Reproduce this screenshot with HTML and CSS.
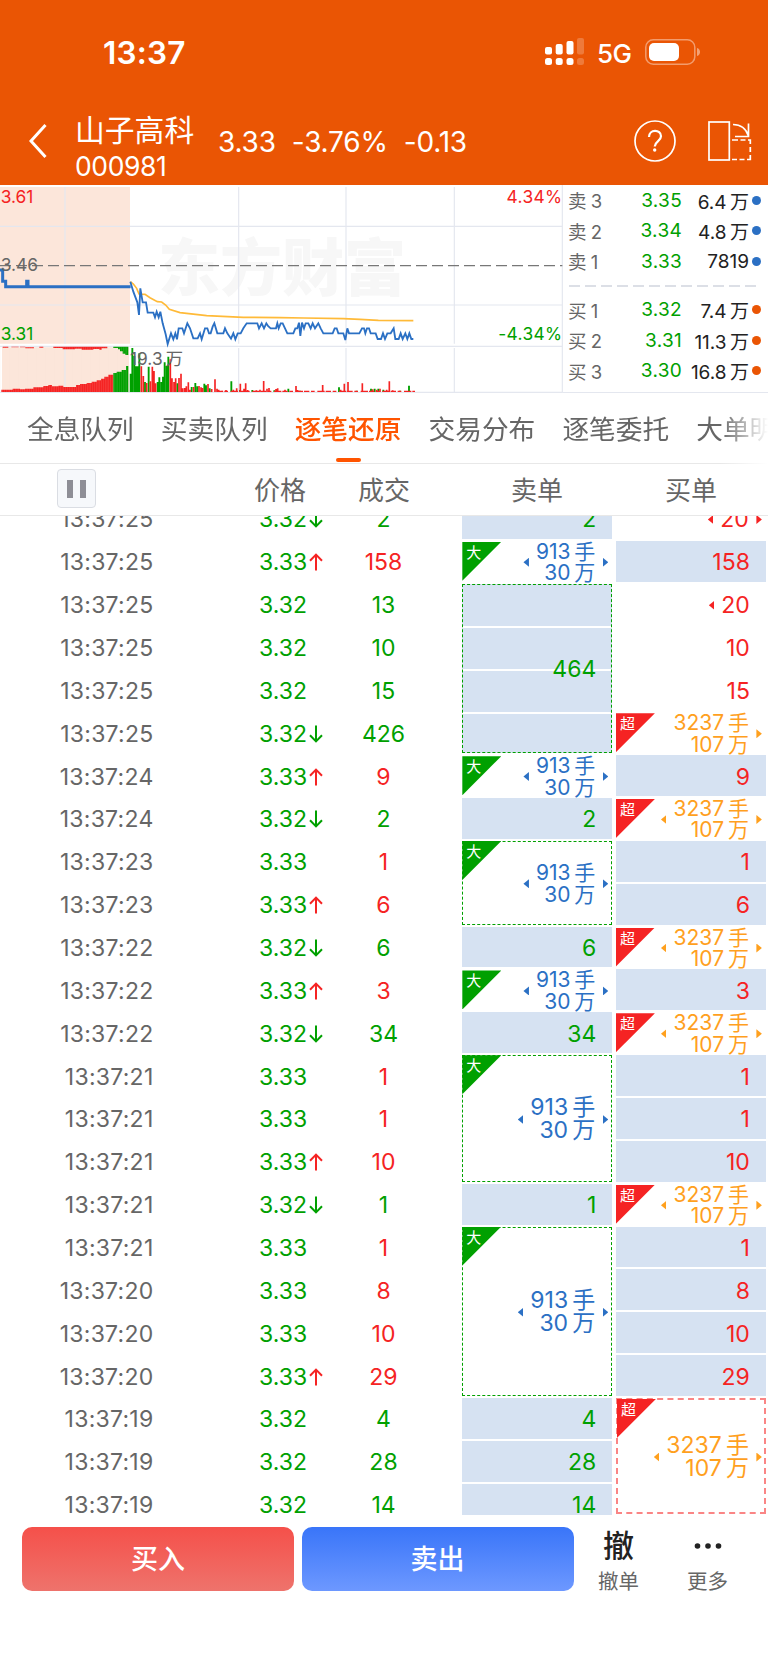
FILE: index.html
```html
<!doctype html>
<html lang="zh-CN">
    <head>
        <meta charset="UTF-8" />
        <title>山子高科 000981</title>
        <link rel="stylesheet" href="styles.css">
    </head>
    <body>
        <!-- Shared arrows -->
        <svg class="defs">
            <symbol id="up" viewBox="0 0 14 18">
                <path d="M7 17.5V1.8M1 7.8L7 1.6l6 6.2" />
            </symbol>
            <symbol id="down" viewBox="0 0 14 18">
                <path d="M7 .5v15.700M1 10.200l6 6.200 6-6.200" />
            </symbol>
        </svg>

        <div class="header">
            <div class="status-bar">
                <div class="clock">13:37</div>
                <div class="status-icons">
                    <svg width="39" height="28" viewBox="0 0 39 28" fill="#fff">
                        <rect x="0" y="9" width="7" height="7.500" rx="2" />
                        <rect x="10.700" y="6" width="7" height="10.500" rx="2" />
                        <rect x="21.500" y="3" width="7" height="13.500" rx="2" />
                        <rect x="32" y="0" width="7" height="16.500" rx="2" opacity=".22" />
                        <rect x="0" y="20" width="7" height="7" rx="2.500" />
                        <rect x="10.700" y="20" width="7" height="7" rx="2.500" />
                        <rect x="21.500" y="20" width="7" height="7" rx="2.500" />
                        <rect x="32" y="20" width="7" height="7" rx="2.500" opacity=".22" />
                    </svg>
                    <span class="network">5G</span>
                    <svg width="56" height="26" viewBox="0 0 56 26">
                        <rect x=".8" y=".8" width="49" height="24.400" rx="7.500" fill="none" stroke="#fff" stroke-opacity=".42" stroke-width="1.500" />
                        <rect x="4" y="4" width="30" height="18" rx="5" fill="#fff" />
                        <path d="M52 9c4 1 4 7 0 8z" fill="#fff" opacity=".45" />
                    </svg>
                </div>
            </div>
            <div class="nav">
                <svg class="back" width="18" height="36" viewBox="0 0 18 36">
                    <path d="M16.500 2L2 18l14.500 16" fill="none" stroke="#fff" stroke-width="3" />
                </svg>
                <div class="stock">
                    <div class="stock-name">山子高科</div>
                    <div class="stock-code">000981</div>
                </div>
                <div class="quote">
                    <span>3.33</span>
                    <span>-3.76%</span>
                    <span>-0.13</span>
                </div>
                <svg class="help" width="42" height="42" viewBox="0 0 42 42" fill="none" stroke="#fff">
                    <circle cx="21" cy="21" r="20" stroke-width="1.700" />
                    <path d="M15 17c0-8 12-8 12-.8 0 5-6.300 5.300-6.300 10.300" stroke-width="2.200" />
                    <circle cx="20.700" cy="30" r="1.700" fill="#fff" stroke="none" />
                </svg>
                <svg class="rotate" width="44" height="42" viewBox="0 0 44 42" fill="none" stroke="#fff" stroke-width="1.700">
                    <rect x="1" y="2" width="20.300" height="38" />
                    <path d="M25 4.500c8 0 13 4 15.500 11.500M40.500 3.500v13H27" />
                    <path d="M24 20h6m2.500 0h5m2.500 0h2.300v4m0 3v5m0 3v4.500H39m-2.500 0h-5m-2.500 0h-5" />
                </svg>
            </div>
        </div>

        <!-- Intraday chart and order book -->
        <div class="market">
            <svg class="chart" viewBox="0 15 1689 624">
                <path class="auction" d="M0 21H390V491H0zM6 502H387V636H6z" />
                <text class="watermark" x="474" y="333">东方财富</text>
                <path class="grid" d="M0 139H1687M0 375H1687M0 499H1687M0 637H1687M195 21V491M716 21V491M1038 21V491M1363 21V491M195 504V636M716 504V636M1038 504V636M1363 504V636M1687 15V639" />
                <path class="base" d="M0 257H1687" />
                <polyline class="average" points="391,305 400,312 410,325 417,342 435,343 450,353 472,365 485,366 497,375 508,388 540,398 620,407 730,412 840,413 912,414 1030,416 1080,418 1135,421 1240,422" />
                <path class="pre" d="M0 270H8V304H17V320H80V304H84V320H392" />
                <polyline class="price-line" points="391,305 400,335 412,367 417,405 421,325 428,367 438,367 443,398 460,398 465,412 470,395 476,412 481,395 488,430 497,463 503,492 513,460 520,478 526,460 531,478 536,445 547,445 552,460 562,430 570,445 580,475 593,475 600,460 605,478 615,445 622,445 627,460 632,460 638,440 643,430 652,460 670,460 675,445 682,460 693,476 700,460 706,478 713,460 722,460 730,445 740,430 772,430 777,445 785,430 792,445 799,430 804,438 812,445 828,445 832,430 836,445 842,430 848,430 855,445 862,460 880,460 886,445 892,445 897,428 901,468 906,428 912,445 917,430 925,430 932,445 938,430 945,445 955,430 962,445 970,460 998,460 1004,445 1010,445 1015,460 1030,460 1036,480 1042,445 1047,460 1078,460 1086,445 1092,445 1096,460 1101,445 1107,445 1112,460 1127,460 1133,477 1143,477 1149,460 1155,477 1162,460 1172,460 1181,445 1186,477 1196,477 1202,460 1208,477 1216,460 1222,477 1228,460 1234,477 1240,477" />
                <path class="fill-red" d="M4 636V629H38V626H60V628H75V626H100V622H130V618H145V615H156V619H175V617H190V621H228V615H240V612H260V609H275V605H290V601H303V596H313V590H325V584H340V636z" />
                <path class="fill-green" d="M340 636V579H350V575H365V570H378V558H385V636z" />
                <path class="fill-red" d="M8 500H25V503H8zM34 500H56V502H34zM60 500H76V505H102V502H60zM118 500H130V503H118zM143 500H160V504H188V508H225V506H245V509H280V507H298V509H305V505H322V500z" />
                <path class="fill-green" d="M340 500H385V525H376V521H368V514H360V508H354V504H340z" />
                <path class="stripe" d="M2 569H387" />
                <path class="bars-green" d="M392 636V581M397 636V504M403 636V528M408 636V559M413 636V559M418 636V520M435 636V606M446 636V560M473 636V606M478 636V592M484 636V606M489 636V590M494 636V547M500 636V558M505 636V530M532 636V610M575 636V621M586 636V609M592 636V619M613 636V611M618 636V616M629 636V625M694 636V604M720 636V630M757 636V630M823 636V631M865 636V626M900 636V632M1017 636V622M1070 636V632M1113 636V626M1124 636V626M1135 636V626M1150 636V629M1200 636V632M1227 636V617" />
                <path class="bars-red" d="M424 636V559M430 636V588M440 636V609M451 636V604M457 636V560M462 636V573M467 636V610M511 636V538M516 636V595M522 636V606M527 636V595M537 636V594M543 636V581M548 636V625M554 636V624M559 636V619M565 636V607M570 636V629M581 636V621M597 636V618M603 636V622M608 636V624M624 636V612M635 636V627M645 636V598M651 636V626M656 636V629M667 636V632M678 636V630M700 636V629M710 636V625M721 636V611M732 636V626M737 636V610M743 636V630M769 636V631M780 636V629M791 636V603M801 636V626M807 636V624M828 636V627M833 636V625M855 636V629M888 636V618M893 636V630M968 636V615M1022 636V629M1033 636V611M1044 636V606M1087 636V610M1118 636V628M1130 636V629M1140 636V626M1160 636V629M1168 636V604M1178 636V631" />
                <path class="floor" d="M652 634H1245" />
                <text class="label red" x="2" y="68">3.61</text>
                <text class="label" x="2" y="274">3.46</text>
                <text class="label green" x="2" y="479">3.31</text>
                <text class="label" x="390" y="556">19.3&thinsp;万</text>
                <text class="label red end" x="1687" y="68">4.34%</text>
                <text class="label green end" x="1687" y="479">-4.34%</text>
            </svg>
            <div class="book">
                <div class="level ask"><span>卖 3</span><b>3.35</b><i>6.4&thinsp;万</i></div>
                <div class="level ask"><span>卖 2</span><b>3.34</b><i>4.8&thinsp;万</i></div>
                <div class="level ask"><span>卖 1</span><b>3.33</b><i>7819</i></div>
                <svg class="book-line" width="190" height="18" viewBox="0 0 190 18">
                    <path d="M0 9H190" stroke="#dcdfe6" stroke-width="2" stroke-dasharray="11 5" />
                </svg>
                <div class="level bid"><span>买 1</span><b>3.32</b><i>7.4&thinsp;万</i></div>
                <div class="level bid"><span>买 2</span><b>3.31</b><i>11.3&thinsp;万</i></div>
                <div class="level bid"><span>买 3</span><b>3.30</b><i>16.8&thinsp;万</i></div>
            </div>
        </div>

        <!-- Tabs -->
        <div class="tabs">
            <div class="tab">全息队列</div>
            <div class="tab">买卖队列</div>
            <div class="tab active">逐笔还原</div>
            <div class="tab">交易分布</div>
            <div class="tab">逐笔委托</div>
            <div class="tab">大单明细</div>
        </div>

        <div class="list-header">
            <div class="pause"></div>
            <div>价格</div>
            <div>成交</div>
            <div>卖单</div>
            <div>买单</div>
        </div>

        <!-- Tick list -->
        <div class="list">
            <div class="trades">
                <div class="trade"><span>13:37:25</span><b>3.32<svg class="green"><use href="#down" /></svg></b><i class="green">2</i></div>
                <div class="trade"><span>13:37:25</span><b>3.33<svg class="red"><use href="#up" /></svg></b><i class="red">158</i></div>
                <div class="trade"><span>13:37:25</span><b>3.32</b><i class="green">13</i></div>
                <div class="trade"><span>13:37:25</span><b>3.32</b><i class="green">10</i></div>
                <div class="trade"><span>13:37:25</span><b>3.32</b><i class="green">15</i></div>
                <div class="trade"><span>13:37:25</span><b>3.32<svg class="green"><use href="#down" /></svg></b><i class="green">426</i></div>
                <div class="trade"><span>13:37:24</span><b>3.33<svg class="red"><use href="#up" /></svg></b><i class="red">9</i></div>
                <div class="trade"><span>13:37:24</span><b>3.32<svg class="green"><use href="#down" /></svg></b><i class="green">2</i></div>
                <div class="trade"><span>13:37:23</span><b>3.33</b><i class="red">1</i></div>
                <div class="trade"><span>13:37:23</span><b>3.33<svg class="red"><use href="#up" /></svg></b><i class="red">6</i></div>
                <div class="trade"><span>13:37:22</span><b>3.32<svg class="green"><use href="#down" /></svg></b><i class="green">6</i></div>
                <div class="trade"><span>13:37:22</span><b>3.33<svg class="red"><use href="#up" /></svg></b><i class="red">3</i></div>
                <div class="trade"><span>13:37:22</span><b>3.32<svg class="green"><use href="#down" /></svg></b><i class="green">34</i></div>
                <div class="trade"><span>13:37:21</span><b>3.33</b><i class="red">1</i></div>
                <div class="trade"><span>13:37:21</span><b>3.33</b><i class="red">1</i></div>
                <div class="trade"><span>13:37:21</span><b>3.33<svg class="red"><use href="#up" /></svg></b><i class="red">10</i></div>
                <div class="trade"><span>13:37:21</span><b>3.32<svg class="green"><use href="#down" /></svg></b><i class="green">1</i></div>
                <div class="trade"><span>13:37:21</span><b>3.33</b><i class="red">1</i></div>
                <div class="trade"><span>13:37:20</span><b>3.33</b><i class="red">8</i></div>
                <div class="trade"><span>13:37:20</span><b>3.33</b><i class="red">10</i></div>
                <div class="trade"><span>13:37:20</span><b>3.33<svg class="red"><use href="#up" /></svg></b><i class="red">29</i></div>
                <div class="trade"><span>13:37:19</span><b>3.32</b><i class="green">4</i></div>
                <div class="trade"><span>13:37:19</span><b>3.32</b><i class="green">28</i></div>
                <div class="trade"><span>13:37:19</span><b>3.32</b><i class="green">14</i></div>
            </div>

            <div class="orders sell">
                <div class="cell fill">2</div>
                <div class="cell big prev next"><em>大</em><p>913&thinsp;手<br>30&thinsp;万</p></div>
                <div class="cell fill dashed rows-4">464</div>
                <div class="cell big prev next"><em>大</em><p>913&thinsp;手<br>30&thinsp;万</p></div>
                <div class="cell fill">2</div>
                <div class="cell big dashed prev next rows-2"><em>大</em><p>913&thinsp;手<br>30&thinsp;万</p></div>
                <div class="cell fill">6</div>
                <div class="cell big prev next"><em>大</em><p>913&thinsp;手<br>30&thinsp;万</p></div>
                <div class="cell fill">34</div>
                <div class="cell big dashed prev next rows-3"><em>大</em><p>913&thinsp;手<br>30&thinsp;万</p></div>
                <div class="cell fill">1</div>
                <div class="cell big dashed prev next rows-4"><em>大</em><p>913&thinsp;手<br>30&thinsp;万</p></div>
                <div class="cell fill">4</div>
                <div class="cell fill">28</div>
                <div class="cell fill">14</div>
            </div>

            <div class="orders buy">
                <div class="cell prev next">20</div>
                <div class="cell fill">158</div>
                <div class="cell prev">20</div>
                <div class="cell">10</div>
                <div class="cell">15</div>
                <div class="cell big next"><em>超</em><p>3237&thinsp;手<br>107&thinsp;万</p></div>
                <div class="cell fill">9</div>
                <div class="cell big prev next"><em>超</em><p>3237&thinsp;手<br>107&thinsp;万</p></div>
                <div class="cell fill">1</div>
                <div class="cell fill">6</div>
                <div class="cell big prev next"><em>超</em><p>3237&thinsp;手<br>107&thinsp;万</p></div>
                <div class="cell fill">3</div>
                <div class="cell big prev next"><em>超</em><p>3237&thinsp;手<br>107&thinsp;万</p></div>
                <div class="cell fill">1</div>
                <div class="cell fill">1</div>
                <div class="cell fill">10</div>
                <div class="cell big prev next"><em>超</em><p>3237&thinsp;手<br>107&thinsp;万</p></div>
                <div class="cell fill">1</div>
                <div class="cell fill">8</div>
                <div class="cell fill">10</div>
                <div class="cell fill">29</div>
                <div class="cell big dashed prev next rows-3 last"><em>超</em><p>3237&thinsp;手<br>107&thinsp;万</p></div>
            </div>
        </div>

        <div class="footer">
            <div class="button buy-button">买入</div>
            <div class="button sell-button">卖出</div>
            <div class="action">
                <strong>撤</strong>
                <span>撤单</span>
            </div>
            <div class="action">
                <svg width="28" height="32" viewBox="0 0 28 32" fill="#222">
                    <circle cx="3.500" cy="16" r="2.800" />
                    <circle cx="14" cy="16" r="2.800" />
                    <circle cx="24.500" cy="16" r="2.800" />
                </svg>
                <span>更多</span>
            </div>
        </div>
    </body>
</html>
```

FILE: styles.css
```css
* {
    box-sizing: border-box;
}

body {
    margin: 0;
    width: 768px;
    height: 1665px;
    overflow: hidden;
    background-color: #fff;
    color: #666;
    font-family: Inter, "Noto Sans CJK SC", sans-serif;
    font-size: 23px;
}

b,
i,
em {
    font-weight: 400;
    font-style: normal;
}

.defs {
    display: none;
}

.red {
    color: #f52323;
}

.green {
    color: #00a000;
}

/* Header */
.header {
    height: 185px;
    background-color: #ea5504;
    color: #fff;
}

.status-bar {
    display: flex;
    justify-content: space-between;
    height: 105px;
    padding: 33px 67px 0 103px;
}

.clock {
    font-size: 31.5px;
    font-weight: 600;
    line-height: 40px;
    letter-spacing: 0.2px;
}

.status-icons {
    display: flex;
    align-items: center;
    height: 38px;
}

.network {
    width: 35px;
    margin: 2px 13px 0 13px;
    font-size: 26px;
    font-weight: 500;
    letter-spacing: -0.5px;
}

.nav {
    display: flex;
    height: 80px;
    padding-left: 29px;
}

.back {
    margin-top: 18px;
}

.stock {
    width: 143px;
    margin-left: 28px;
    padding-top: 4px;
}

.stock-name {
    font-size: 29.8px;
    line-height: 42px;
}

.stock-code {
    padding-top: 2px;
    font-size: 26.5px;
    line-height: 27px;
    letter-spacing: -0.4px;
}

.quote {
    display: flex;
    gap: 16px;
    width: 416px;
    padding-top: 19px;
    font-size: 28px;
    line-height: 36px;
    letter-spacing: -0.2px;
    white-space: nowrap;
}

.help {
    margin-top: 15px;
}

.rotate {
    margin: 15px 0 0 32px;
}

/* Chart */
.market {
    display: flex;
    height: 208px;
}

.chart {
    width: 563px;
    height: 208px;
}

.chart path,
.chart polyline {
    fill: none;
}

.chart .auction {
    fill: #fce6da;
}

.watermark {
    fill: #f7f7f7;
    font-size: 186px;
    font-weight: 900;
}

.grid {
    stroke: #e4e7ef;
    stroke-width: 3.5;
}

.base {
    stroke: #777;
    stroke-width: 3.5;
    stroke-dasharray: 33 15;
}

.average {
    stroke: #ffba38;
    stroke-width: 5;
}

.pre {
    stroke: #2b70c4;
    stroke-width: 9;
}

.price-line {
    stroke: #2b70c4;
    stroke-width: 5.5;
}

.chart .fill-red {
    fill: #f52323;
}

.chart .fill-green {
    fill: #00a000;
}

.stripe {
    stroke: #fce6da;
    stroke-opacity: 0.3;
    stroke-width: 134;
    stroke-dasharray: 1 4.4;
}

.bars-red {
    stroke: #f52323;
    stroke-width: 5;
}

.bars-green {
    stroke: #00a000;
    stroke-width: 5.6;
}

.floor {
    stroke: #f52323;
    stroke-width: 4;
    stroke-dasharray: 16 5 11 8 22 3;
}

.label {
    fill: #666;
    font-size: 52px;
}

.label.red {
    fill: #f52323;
}

.label.green {
    fill: #00a000;
}

.label.end {
    text-anchor: end;
    letter-spacing: 1px;
}

/* Order book */
.book {
    width: 205px;
    padding-left: 5px;
    border-bottom: 1px solid #e4e7ef;
}

.level {
    display: grid;
    grid-template-columns: 43px 71px 67px 13px;
    align-items: center;
    height: 30.5px;
    font-size: 19px;
}

.level span {
    font-size: 18.5px;
    word-spacing: -1px;
}

.level b {
    color: #00a000;
    text-align: right;
    letter-spacing: 0.3px;
}

.level i {
    display: flex;
    justify-content: flex-end;
    color: #222;
    white-space: nowrap;
}

.level::after {
    content: "";
    width: 9px;
    height: 9px;
    margin-left: 3px;
    border-radius: 50%;
    background-color: #2b70c4;
}

.level.bid::after {
    background-color: #ea5504;
}

.book-line {
    display: block;
    margin-left: 1px;
}

/* Tabs */
.tabs {
    display: flex;
    gap: 27.1px;
    height: 71px;
    padding-left: 27px;
    overflow: hidden;
    border-bottom: 1px solid #e8e8e8;
    -webkit-mask-image: linear-gradient(90deg, #000 720px, transparent 768px);
    mask-image: linear-gradient(90deg, #000 720px, transparent 768px);
}

.tab {
    position: relative;
    flex: none;
    font-size: 26.7px;
    line-height: 72px;
}

.tab.active {
    color: #ff5400;
    font-weight: 500;
}

.tab.active::after {
    content: "";
    position: absolute;
    left: 41px;
    bottom: 1px;
    width: 25px;
    height: 4px;
    border-radius: 2px;
    background-color: #ff5400;
}

.list-header {
    display: grid;
    grid-template-columns: 197px 104px 153px 154px 103px;
    align-items: center;
    height: 52px;
    padding: 0 0 2px 57px;
    border-bottom: 1px solid #e8e8e8;
    font-size: 26px;
}

.pause {
    display: flex;
    gap: 7px;
    justify-content: center;
    align-items: center;
    width: 39px;
    height: 39px;
    border: 1px solid #dadde3;
    border-radius: 4px;
    background-color: #f6f8fb;
}

.pause::before,
.pause::after {
    content: "";
    width: 6px;
    height: 18px;
    background-color: #8e8e96;
}

/* Tick list */
.list {
    display: flex;
    height: 999px;
    overflow: hidden;
}

.trades,
.orders {
    flex: none;
    margin-top: -18px;
}

.trades {
    width: 462.3px;
}

.trade {
    display: grid;
    grid-template-columns: 153.5px 189.5px 81px;
    align-items: center;
    height: 42.87px;
}

.trade span {
    text-align: right;
    letter-spacing: 0.25px;
}

.trade b {
    display: flex;
    align-items: center;
    gap: 2px;
    padding-left: 105.5px;
    color: #00a000;
}

.trade i {
    text-align: center;
}

.trade svg {
    width: 14px;
    height: 18px;
    fill: none;
    stroke: currentColor;
    stroke-width: 2;
}

.orders {
    display: grid;
    grid-auto-rows: 40.87px;
    row-gap: 2px;
    width: 150px;
    margin-right: 3.6px;
}

.cell {
    position: relative;
    display: flex;
    align-items: center;
    justify-content: flex-end;
    padding: 2px 16px 0 0;
}

.cell p {
    margin: 0;
    font-size: 21px;
    line-height: 21.5px;
    text-align: right;
}

.fill {
    background: repeating-linear-gradient(#d6e2f2 0, #d6e2f2 40.87px, #fff 40.87px, #fff 42.87px);
}

.dashed {
    border: 1px dashed #00a000;
    padding-right: 15px;
}

.rows-2 {
    grid-row: span 2;
}

.rows-3 {
    grid-row: span 3;
}

.rows-4 {
    grid-row: span 4;
}

.rows-3 p,
.rows-4 p {
    font-size: 23px;
    line-height: 23px;
}

.last {
    height: 116px;
}

.sell {
    color: #00a000;
}

.buy {
    margin-right: 0;
    color: #f52323;
}

.buy .dashed {
    border: 2px dashed #fa8585;
}

.sell .big {
    color: #2b70c4;
}

.buy .big {
    color: #ffa01e;
}

.prev::before,
.next::after {
    content: "";
    width: 5.5px;
    height: 9px;
    background-color: currentColor;
}

.prev::before {
    margin-right: 7px;
    clip-path: polygon(0 50%, 100% 0, 100% 100%);
}

.next::after {
    margin-left: 7.5px;
    clip-path: polygon(0 0, 100% 50%, 0 100%);
}

.cell.next {
    padding-right: 4px;
}

.cell.dashed.next {
    padding-right: 3px;
}

.buy .cell.dashed.next {
    padding-right: 2px;
}

/* Size ribbon in the cell corner */
.cell em {
    position: absolute;
    top: 1px;
    left: 0;
    width: 39px;
    height: 39px;
    padding: 1px 0 0 4px;
    background-color: #00a000;
    clip-path: polygon(0 0, 100% 0, 0 100%);
    color: #fff;
    font-size: 15px;
    line-height: 20px;
}

.cell.dashed em {
    top: -1px;
    left: -1px;
}

.buy .cell em {
    background-color: #f52323;
}

/* Footer */
.footer {
    display: flex;
    padding: 12px 0 0 22px;
}

.button {
    width: 272px;
    height: 64px;
    margin-right: 7.5px;
    border-radius: 10px;
    color: #fff;
    font-size: 27px;
    font-weight: 500;
    line-height: 66px;
    text-align: center;
}

.buy-button {
    background: linear-gradient(#f5504a, #ee736c);
}

.sell-button {
    background: linear-gradient(#3975f9, #6d98ff);
}

.sell-button + .action {
    margin-left: -7px;
}

.action {
    display: flex;
    flex-direction: column;
    align-items: center;
    width: 89px;
    padding-top: 3px;
}

.action strong {
    color: #222;
    font-size: 31px;
    font-weight: 500;
    line-height: 32px;
}

.action span {
    margin-top: 6px;
    font-size: 20.5px;
    line-height: 28px;
}
```
